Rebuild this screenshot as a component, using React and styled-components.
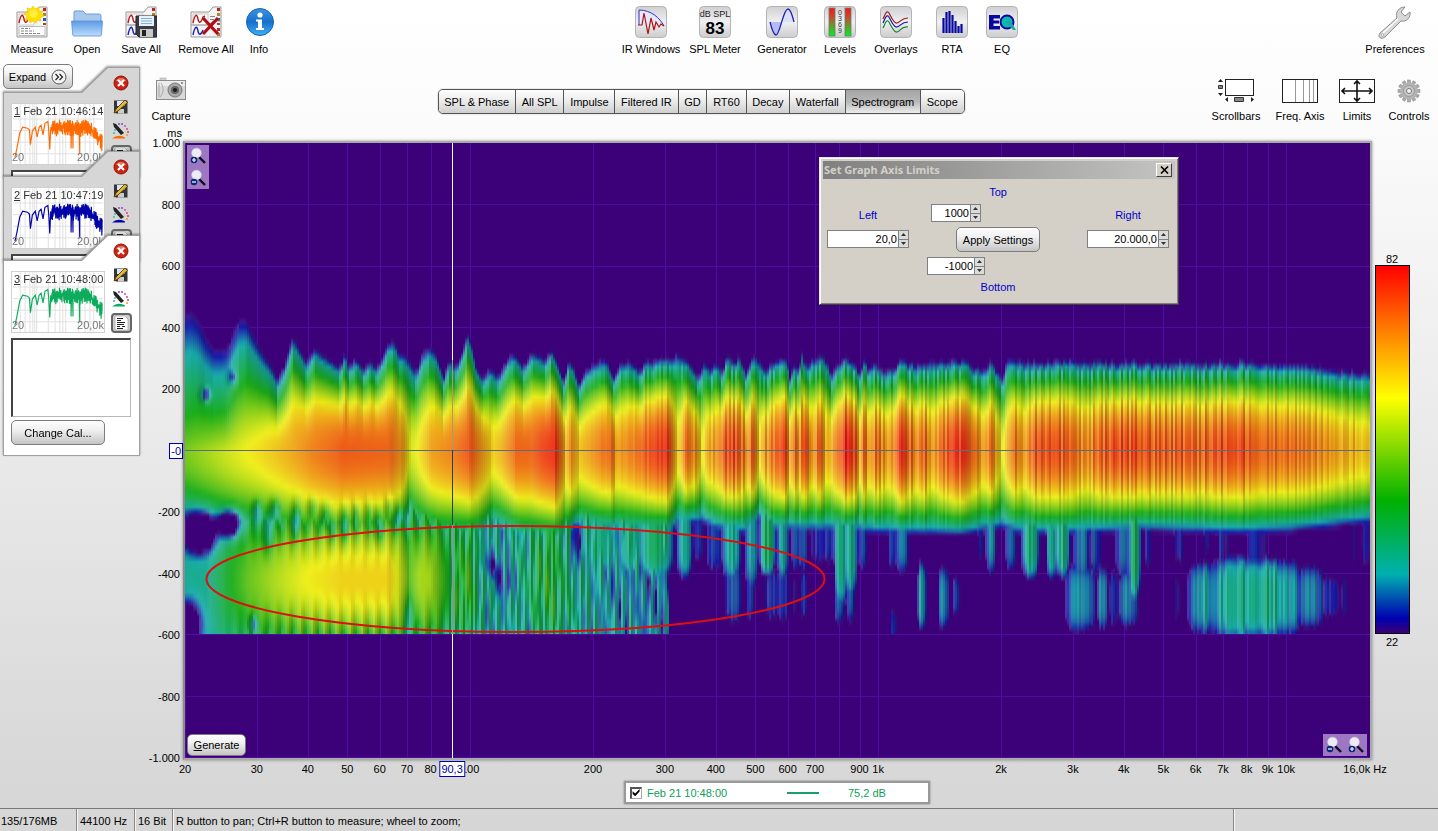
import React, { useState } from "react";
import styled, { createGlobalStyle, css } from "styled-components";

/* ---------- spectrogram model ---------- */

// plot area in drawing units
const PLOT = { x: 185, y: 143, w: 1185, h: 615 };
const Y0 = 302;
const Y1 = 634;
const COL = 2;
const STEP = 5;

const COLOURS = [
  [22, 60, 0, 120],
  [25, 0, 0, 176],
  [31, 0, 176, 176],
  [44, 0, 176, 0],
  [60, 255, 255, 0],
  [70, 255, 140, 0],
  [82, 255, 0, 0],
];

const TOP_EDGE = [
  185, 311, 191, 310, 198, 318, 205, 335, 213, 347, 222, 348, 228, 345, 233, 330,
  239, 318, 246, 319, 252, 333, 262, 352, 270, 364, 277, 379, 284, 365, 292, 335,
  299, 348, 306, 362, 314, 347, 322, 354, 340, 367, 344, 351, 348, 366, 356, 358,
  363, 369, 370, 360, 376, 368, 383, 355, 387, 343, 394, 340, 398, 353, 404, 353,
  410, 362, 416, 371, 422, 352, 429, 346, 435, 352, 443, 377, 449, 359, 456, 366,
  462, 350, 467, 332, 471, 345, 475, 365, 482, 378, 490, 367, 498, 376, 508, 356,
  514, 353, 523, 366, 532, 351, 545, 359, 551, 349, 556, 360, 563, 381, 568, 359,
  573, 366, 578, 385, 585, 370, 595, 362, 606, 359, 613, 378, 620, 362, 630, 361,
  640, 371, 645, 360, 652, 362, 660, 356, 670, 358, 677, 354, 685, 359, 693, 367,
  698, 378, 703, 360, 710, 369, 716, 360, 722, 373, 727, 353, 732, 362, 740, 356,
  745, 376, 752, 354, 758, 359, 764, 371, 772, 361, 785, 355, 789, 376, 794, 362,
  798, 372, 801, 353, 807, 368, 812, 357, 825, 357, 832, 376, 837, 363, 844, 358,
  855, 366, 860, 369, 864, 359, 867, 371, 872, 361, 886, 372, 900, 361, 920, 363,
  940, 361, 968, 360, 980, 371, 990, 361, 1002, 376, 1006, 361, 1070, 360, 1110, 361,
  1200, 362, 1240, 361, 1270, 363, 1300, 364, 1330, 369, 1350, 371, 1370, 373,
];

const PEAK = [
  185, 51, 230, 58, 260, 62, 290, 67, 310, 71, 340, 75, 390, 74, 402, 69, 410, 58,
  416, 60, 430, 68, 450, 71, 470, 76, 480, 70, 492, 63, 500, 66, 515, 74, 530, 74,
  540, 77, 555, 80, 561, 72, 565, 66, 570, 71, 579, 65, 600, 72, 612, 74, 615, 68,
  640, 74, 660, 79, 668, 79, 676, 64, 678, 62, 685, 74, 695, 71, 702, 60, 705, 66,
  720, 72, 724, 76, 733, 78, 743, 73, 746, 67, 752, 78, 759, 62, 765, 69, 775, 75,
  785, 80, 788, 67, 795, 75, 799, 69, 802, 79, 812, 68, 818, 76, 826, 66, 833, 69,
  845, 81, 856, 76, 858, 67, 864, 75, 867, 67, 876, 75, 888, 67, 900, 79, 915, 72,
  925, 75, 930, 67, 945, 76, 960, 80, 974, 75, 980, 67, 990, 74, 1001, 61, 1015, 73,
  1022, 68, 1035, 77, 1050, 77, 1075, 74, 1085, 71, 1115, 78, 1150, 76, 1200, 75,
  1235, 78, 1250, 75, 1270, 74, 1300, 73, 1330, 69, 1370, 64,
];

const BOTTOM_EDGE = [
  185, 526, 240, 541, 300, 550, 340, 554, 380, 551, 402, 540, 409, 522, 416, 536,
  440, 545, 480, 543, 492, 530, 520, 543, 560, 547, 580, 532, 620, 535, 668, 536,
  678, 526, 702, 524, 715, 531, 745, 535, 759, 521, 770, 532, 850, 533, 880, 535,
  960, 537, 1001, 530, 1020, 535, 1060, 536, 1140, 532, 1240, 535, 1290, 533, 1370, 524,
];

const LOW_PEAK = [
  185, 33, 208, 34, 225, 42, 250, 50, 280, 56, 305, 60, 340, 63, 388, 63, 400, 58,
  409, 49, 420, 55, 432, 54, 445, 45, 452, 40, 467, 48, 476, 37, 492, 32, 505, 33,
  525, 36, 550, 43, 562, 37, 580, 35, 600, 31, 668, 28,
];

// x, y, rx, ry, level
const BLOBS = [
  [655, 540, 20, 40, 38], [630, 540, 16, 36, 35], [600, 540, 18, 34, 35],
  [684, 540, 9, 40, 33], [698, 536, 6, 26, 26], [714, 540, 9, 32, 27],
  [731, 540, 10, 44, 34], [733, 592, 9, 32, 28], [751, 540, 7, 52, 32],
  [750, 592, 4, 30, 27], [767, 540, 9, 38, 39], [782, 540, 6, 44, 34],
  [772, 594, 9, 26, 26], [782, 594, 6, 30, 27], [795, 540, 5, 32, 28],
  [803, 540, 4, 32, 28], [794, 596, 2, 20, 24], [803, 594, 4, 24, 26],
  [816, 536, 6, 28, 25], [828, 536, 8, 28, 26], [840, 540, 7, 72, 36],
  [850, 540, 7, 60, 34], [839, 590, 5, 36, 29], [850, 588, 5, 34, 27],
  [860, 540, 6, 30, 27], [893, 540, 5, 30, 27], [902, 540, 8, 32, 28],
  [921, 596, 5, 36, 32], [943, 598, 6, 32, 30], [956, 596, 4, 19, 26],
  [893, 632, 3, 24, 27], [980, 540, 3, 18, 24], [990, 536, 6, 38, 30],
  [1010, 540, 6, 30, 27], [1030, 536, 10, 46, 37], [1051, 538, 6, 44, 35],
  [1062, 538, 8, 42, 36], [1081, 540, 9, 48, 30], [1094, 540, 6, 36, 27],
  [1078, 598, 14, 36, 31], [1087, 598, 8, 34, 30], [1102, 598, 6, 32, 30],
  [1114, 598, 8, 28, 26], [1126, 598, 9, 30, 30], [1134, 598, 6, 26, 26],
  [1122, 540, 9, 40, 29], [1134, 540, 7, 64, 38], [1147, 540, 5, 26, 24],
  [1179, 538, 6, 24, 24], [1207, 536, 4, 18, 24], [1222, 538, 6, 26, 25],
  [1256, 540, 10, 40, 26], [1364, 538, 12, 22, 23], [1176, 598, 5, 18, 23],
  [1203, 598, 17, 38, 32], [1235, 598, 30, 44, 35], [1264, 598, 38, 42, 35],
  [1290, 598, 12, 38, 31], [1309, 597, 17, 31, 29], [1330, 597, 17, 20, 25],
];

// places where the level falls away
const HOLES = [
  [199, 533, 15, 18, 34], [229, 524, 10, 13, 30], [188, 624, 11, 20, 26],
  [205, 395, 4, 6, 18], [232, 378, 4, 7, 12], [257, 511, 4, 9, 14],
  [275, 510, 5, 10, 12], [296, 520, 4, 16, 14], [253, 624, 3, 8, 18],
  [325, 516, 5, 12, 10], [344, 524, 4, 16, 13], [355, 516, 3, 12, 11],
  [378, 526, 4, 16, 12], [398, 518, 4, 12, 13], [368, 514, 3, 12, 9],
  [312, 508, 4, 10, 8], [332, 530, 3, 12, 8], [388, 508, 3, 10, 7],
  [268, 535, 6, 18, 9], [492, 566, 4, 14, 10], [509, 584, 3, 14, 11],
  [500, 578, 4, 16, 9], [484, 564, 3, 12, 8], [575, 545, 5, 24, 12],
  [409, 615, 5, 20, 10],
];

const hash = (n) => {
  const v = Math.sin(n * 127.1) * 43758.5453;
  return v - Math.floor(v);
};

const lookup = (table, x) => {
  if (x <= table[0]) return table[1];
  for (let i = 2; i < table.length; i += 2) {
    if (x <= table[i]) {
      const t = (x - table[i - 2]) / (table[i] - table[i - 2]);
      return table[i - 1] + (table[i + 1] - table[i - 1]) * t;
    }
  }
  return table[table.length - 1];
};

const level = (x, y) => {
  const grain = x > 570 ? Math.min(1, (x - 570) / 250) : 0;
  const noise = (hash(Math.round(x / 2)) - 0.5) * grain;
  const fade = x > 1250 ? 0.5 : 1;
  const peak = lookup(PEAK, x) + noise * 4 * fade;
  const top = lookup(TOP_EDGE, x) - noise * 7 * fade;
  const bottom = lookup(BOTTOM_EDGE, x);
  const dy = y - 450;
  const r = Math.abs(dy < 0 ? dy / (450 - top) : dy / (bottom - 450));
  // the low end falls off more slowly above the axis
  const curve = dy < 0 ? 1 + Math.min(1, Math.max(0, (x - 225) / 70)) : 2;
  let v = peak - (peak - 22) * Math.pow(r, curve);

  if (x < 669 && y > 470) {
    const far = Math.abs(y - 580) / 60;
    const rise = Math.min(1, Math.max(0, (x - 220) / 80));
    const streak =
      x < 450
        ? Math.cos((x * 2 * Math.PI) / 12.5) * 6 * far * far * rise
        : Math.cos((x * 2 * Math.PI) / 7) * 3 +
          (hash(Math.round(x / 2) + 7) - 0.5) * 5 +
          Math.sin(x * 0.71 + y * 0.06) * 2.5 +
          Math.sin(x * 0.33 - y * 0.09) * 2;
    const lp = lookup(LOW_PEAK, x);
    v = Math.max(v, lp + streak - (lp - 31) * 0.62 * far * far);
  }
  if (y > 500) {
    for (const [bx, by, rx, ry, bl] of BLOBS) {
      const dx = (x - bx) / rx;
      if (dx > -1 && dx < 1) {
        const d = (y - by) / ry;
        const m = bl + noise * 4 - (bl - 22) * (dx * dx + d * d * d * d);
        if (m > v) v = m;
      }
    }
  }
  if (x < 600) {
    for (const [hx, hy, rx, ry, hl] of HOLES) {
      const dx = (x - hx) / rx;
      const d = (y - hy) / ry;
      const q = dx * dx + d * d;
      if (q < 6) v -= hl * Math.exp(-q);
    }
  }
  return v;
};

const paint = (v, slope) => {
  let i = 1;
  while (i < COLOURS.length - 1 && v > COLOURS[i][0]) i += 1;
  const a = COLOURS[i - 1];
  const b = COLOURS[i];
  const t = Math.max(0, Math.min(1, (v - a[0]) / (b[0] - a[0])));
  const light = Math.tanh(slope) * (slope > 0 ? 0.18 : 0.22);
  const rgb = [1, 2, 3].map((k) => {
    const c = (a[k] + (b[k] - a[k]) * t) * 0.84 + 24;
    return Math.round(light > 0 ? c + (255 - c) * light : c * (1 + light));
  });
  return `rgb(${rgb.join(",")})`;
};

const buildColumns = () => {
  const columns = [];
  for (let x = PLOT.x; x < PLOT.x + PLOT.w; x += COL) {
    const samples = [];
    for (let y = Y0; y <= Y1 + 1; y += STEP) {
      const v = level(x, y);
      samples.push({ y, v, slope: (level(x + COL, y) - v) / COL });
    }
    const stops = samples.filter(
      (s, i) =>
        s.v > 22 ||
        (samples[i - 1] && samples[i - 1].v > 22) ||
        (samples[i + 1] && samples[i + 1].v > 22)
    );
    columns.push({ x, stops });
  }
  return columns;
};

const COLUMNS = buildColumns();
const SPAN = PLOT.w / 408;
const across = (f) => Math.log10(f / 20) / SPAN;

const FREQUENCIES = [
  20, 30, 40, 50, 60, 70, 80, 90, 100, 200, 300, 400, 500, 600, 700, 800, 900,
  1000, 2000, 3000, 4000, 5000, 6000, 7000, 8000, 9000, 10000,
];

const Spectrogram = () => (
  <PlotSvg
    viewBox={`${PLOT.x} ${PLOT.y} ${PLOT.w} ${PLOT.h}`}
    preserveAspectRatio="none"
    role="img"
    aria-label="Spectrogram"
  >
    <defs>
      {COLUMNS.map((c) => (
        <linearGradient
          key={c.x}
          id={`c${c.x}`}
          gradientUnits="userSpaceOnUse"
          x1="0"
          x2="0"
          y1={Y0}
          y2={Y1 + 4}
        >
          {c.stops.map((s) => (
            <stop
              key={s.y}
              offset={(s.y - Y0) / (Y1 + 4 - Y0)}
              stopColor={paint(s.v, s.slope)}
              stopOpacity={Math.max(0, Math.min(1, (s.v - 22) / 1.2))}
            />
          ))}
        </linearGradient>
      ))}
    </defs>
    <g stroke="#500ca0" strokeWidth="1">
      {FREQUENCIES.map((f) => {
        const x = Math.round(PLOT.x + across(f) * PLOT.w) + 0.5;
        return <line key={f} x1={x} x2={x} y1="143" y2="758" />;
      })}
      {[204.5, 266.5, 327.5, 389.5, 512.5, 573.5, 634.5, 696.5, 757.5].map((y) => (
        <line key={y} x1="185" x2="1370" y1={y} y2={y} />
      ))}
    </g>
    <g shapeRendering="crispEdges">
      {COLUMNS.map((c) => (
        <rect key={c.x} x={c.x} y={Y0} width={COL} height={Y1 - Y0} fill={`url(#c${c.x})`} />
      ))}
    </g>
    <ellipse cx="515.5" cy="579" rx="309" ry="53" fill="none" stroke="#dc1010" strokeWidth="2" />
    <path d="M185 450.5H1370" stroke="#5c6c7c" strokeWidth="1" />
    <path d="M452.5 143V360M452.5 634V758" stroke="#fff" strokeWidth="1" />
    <path d="M452.5 360V450" stroke="#a8987c" strokeWidth="1" />
    <path d="M452.5 450V525" stroke="#30384c" strokeWidth="1" />
    <path d="M452.5 525V634" stroke="#a08898" strokeWidth="1" />
  </PlotSvg>
);

/* ---------- icons ---------- */

const SheetBase = ({ id }) => (
  <>
    <path d="M1 6H19L23 1H31V31H1Z" fill="#f4f4f4" stroke="#999" />
    <path d="M3 8H18V19H3Z" fill="#fff" stroke="#ccc" />
    <path d="M3 17C5 7 7 8 8 13S11 17 13 11L15 10" fill="none" stroke="#c01818" strokeWidth="1.4" />
    <path d="M27 2h3v3h-3z" fill="#c02020" />
    <path d="M27 7h3v3h-3z" fill="#b88020" />
    <path d="M27 12h3v3h-3z" fill="#2060b0" />
    <path d="M27 17h3v2h-3z" fill="#b04020" />
    <path d="M20 10.500H25M20 13.500H24" stroke="#888" />
    {id === "two" && (
      <>
        <path d="M1 19H19L23 15H31" fill="none" stroke="#999" />
        <path d="M3 29C5 19 7 20 8 25S11 29 13 24" fill="none" stroke="#1820b0" strokeWidth="1.4" />
        <path d="M27 22h3v3h-3z" fill="#c02020" />
        <path d="M27 27h3v3h-3z" fill="#b88020" />
      </>
    )}
  </>
);

const MeasureIcon = () => (
  <svg width="32" height="32" viewBox="0 0 32 32">
    <SheetBase />
    <path d="M3 20.500H29V29.500H3Z" fill="#fff" stroke="#bbb" />
    <path d="M5 22.500H14M5 25H18M5 27.500H24" stroke="#666" strokeWidth="0.800" strokeDasharray="3 1" />
    <path
      d="M17 0l2 3 4-2 0 4 4 0-2 3 3 2-4 2 1 3-4-1-1 3-3-2-3 2-1-3-4 0 2-4-3-2 4-2-1-4 4 1z"
      fill="#ffe000"
      stroke="#f0c000"
      strokeWidth="0.600"
    />
    <circle cx="17.500" cy="7.500" r="4" fill="#fff040" />
  </svg>
);

const OpenIcon = () => (
  <svg width="32" height="32" viewBox="0 0 32 32">
    <defs>
      <linearGradient id="folder" x2="0" y2="1">
        <stop offset="0" stopColor="#5c9be4" />
        <stop offset="1" stopColor="#bcdcfc" />
      </linearGradient>
    </defs>
    <path d="M3 26V6Q3 5 4 5H12L15 8H28Q30 8 30 10V26Z" fill="#a8c8ee" stroke="#6a9cd8" />
    <path d="M0.500 15H31.500L30.500 29Q30 30 29 30H3Q2 30 1.800 29Z" fill="url(#folder)" stroke="#5c93dc" strokeWidth="0.800" />
  </svg>
);

const SaveAllIcon = () => (
  <svg width="32" height="32" viewBox="0 0 32 32">
    <SheetBase id="two" />
    <path d="M11 10H32V31H14L11 28Z" fill="#3a3a44" stroke="#222" />
    <path d="M14 10H29V20H14Z" fill="#e4f0fa" />
    <path d="M16 12.500H27M16 15H27M16 17.500H27" stroke="#8cb0d4" />
    <path d="M15 23H28V31H15Z" fill="#c8c8c8" />
    <path d="M17 24H21V30H17Z" fill="#222" />
  </svg>
);

const RemoveAllIcon = () => (
  <svg width="32" height="32" viewBox="0 0 32 32">
    <SheetBase id="two" />
    <path d="M13 12L28 28M28 12L13 28" stroke="#b00c14" strokeWidth="3.200" />
  </svg>
);

const InfoIcon = () => (
  <svg width="32" height="32" viewBox="0 0 32 32">
    <defs>
      <linearGradient id="info" x2="0" y2="1">
        <stop offset="0" stopColor="#3c94e4" />
        <stop offset="0.500" stopColor="#1670cc" />
        <stop offset="1" stopColor="#40b0f4" />
      </linearGradient>
    </defs>
    <circle cx="17" cy="16" r="13.500" fill="url(#info)" stroke="#1464b8" />
    <circle cx="17" cy="9" r="2.600" fill="#fff" />
    <path d="M13 13.500H19V22H21V24H13V22H15V15.500H13Z" fill="#fff" />
  </svg>
);

const TileIcon = ({ children }) => (
  <svg width="32" height="32" viewBox="0 0 32 32">
    <defs>
      <linearGradient id="tile" x2="0" y2="1">
        <stop offset="0" stopColor="#d0d0d2" />
        <stop offset="0.500" stopColor="#f0f0f2" />
        <stop offset="1" stopColor="#ccccce" />
      </linearGradient>
    </defs>
    <rect x="0.500" y="0.500" width="31" height="31" rx="4" fill="url(#tile)" stroke="#b4b4b4" />
    {children}
  </svg>
);

const IrIcon = () => (
  <TileIcon>
    <path d="M4 19V4C16 4 25 12 29 20" fill="#e8e8fa" stroke="#3030c0" />
    <path d="M3 19H7L9 7 13 28 16 12 19 24 21 16 24 21 26 18 29 20" fill="none" stroke="#a81414" strokeWidth="1.200" />
  </TileIcon>
);

const SplIcon = () => (
  <TileIcon>
    <text x="16" y="11" textAnchor="middle" fontSize="9" fontFamily="Liberation Sans" fill="#222">dB SPL</text>
    <text x="16" y="28" textAnchor="middle" fontSize="17" fontWeight="700" fontFamily="Liberation Sans">83</text>
  </TileIcon>
);

const GeneratorIcon = () => (
  <TileIcon>
    <path d="M4 16C6 24 8 29 10 29S14 24 16 16Z" fill="#b4bcf4" />
    <path d="M16 16C18 8 20 3 22 3S26 8 28 16Z" fill="#dce0fc" />
    <path d="M4 16C6 24 8 29 10 29C14 29 17 3 22 3C24 3 26 8 28 16" fill="none" stroke="#2020b0" strokeWidth="1.300" />
  </TileIcon>
);

const LevelsIcon = () => (
  <TileIcon>
    <defs>
      <linearGradient id="meter" x2="0" y2="1">
        <stop offset="0" stopColor="#ff1010" />
        <stop offset="0.350" stopColor="#c05030" />
        <stop offset="1" stopColor="#00f020" />
      </linearGradient>
    </defs>
    <rect x="5" y="2" width="6" height="28" fill="url(#meter)" stroke="#608070" strokeWidth="0.800" />
    <rect x="21" y="2" width="6" height="28" fill="url(#meter)" stroke="#608070" strokeWidth="0.800" />
    {["0", "3", "6", "9"].map((t, i) => (
      <text key={t} x="16" y={9 + i * 6} textAnchor="middle" fontSize="7" fontFamily="Liberation Sans" fill="#333">{t}</text>
    ))}
  </TileIcon>
);

const OverlaysIcon = () => (
  <TileIcon>
    <g fill="none" strokeWidth="1.200">
      <path d="M3 13C5 9 6 5 8 6S13 18 17 17 21 12 28 12" stroke="#a01818" />
      <path d="M3 17C5 13 6 9 8 10S13 22 17 21 21 16 28 16" stroke="#1818a8" />
      <path d="M3 22C5 18 6 14 8 15S13 27 17 26 21 20 28 21" stroke="#188828" />
    </g>
  </TileIcon>
);

const RtaIcon = () => (
  <TileIcon>
    <path d="M7.500 27V12M10.500 27V6M13.500 27V5M16.500 27V9M19.500 27V15M22.500 27V20M25.500 27V18" stroke="#0808a0" strokeWidth="2.200" />
  </TileIcon>
);

const EqIcon = () => (
  <TileIcon>
    <path d="M3 9H14V12.500H7.500V14.500H13V17.500H7.500V20H14V23.500H3Z" fill="#0808a0" />
    <circle cx="21" cy="16" r="6.500" fill="#10b8b0" stroke="#0808a0" strokeWidth="2" />
    <path d="M20 16L27 24H30L24 14Z" fill="#18a8a8" />
  </TileIcon>
);

const WrenchIcon = () => (
  <svg width="34" height="34" viewBox="0 0 34 34">
    <path
      d="M2 27L19 12C17 6 21 1 27 1L23 6L27 10L32 6C33 12 28 16 23 15L7 31C3 34 -1 31 2 27Z"
      fill="#d8d8d8"
      stroke="#8c8c8c"
    />
    <path d="M5 27L20 13" stroke="#fff" strokeWidth="1.500" />
    <circle cx="4.500" cy="29" r="1.300" fill="#fff" stroke="#888" strokeWidth="0.600" />
  </svg>
);

const CameraIcon = () => (
  <svg width="32" height="24" viewBox="0 0 32 24">
    <rect x="5" y="1" width="6" height="3" fill="#d0d0d0" stroke="#aaa" strokeWidth="0.600" />
    <rect x="1.500" y="3.500" width="29" height="19" fill="#d8d8d8" stroke="#8c8c8c" />
    <path d="M2 4H30V9H2Z" fill="#ececec" />
    <path d="M4 6V20M6 6C9 10 9 16 5 20" stroke="#aaa" fill="none" />
    <circle cx="20" cy="13" r="7" fill="#a8a8a8" stroke="#777" />
    <circle cx="20" cy="13" r="4" fill="#666" />
    <circle cx="20" cy="13" r="2" fill="#1c1c1c" />
    <circle cx="27" cy="6" r="1" fill="#777" />
  </svg>
);

const ScrollbarsIcon = () => (
  <svg width="38" height="26" viewBox="0 0 38 26">
    <rect x="8.500" y="2.500" width="28" height="16" fill="#fff" stroke="#222" />
    <path d="M3.500 2l2.500 3h-5zM3.500 19l2.500-3h-5zM8 22.500l3-2.500v5zM37 22.500l-3-2.500v5z" fill="#222" />
    <path d="M1.500 8.500h4v3h-4zM17.500 20.500h9v4h-9z" fill="#888" stroke="#333" />
  </svg>
);

const FreqAxisIcon = () => (
  <svg width="38" height="26" viewBox="0 0 38 26">
    <rect x="1.500" y="2.500" width="35" height="23" fill="#fff" stroke="#222" />
    <path d="M14.500 3V25M22.500 3V25M28.500 3V25M32.500 3V25" stroke="#999" />
  </svg>
);

const LimitsIcon = () => (
  <svg width="38" height="26" viewBox="0 0 38 26">
    <rect x="1.500" y="2.500" width="35" height="23" fill="#fff" stroke="#222" />
    <path d="M4 14H34M19 5V24M7 11L4 14L7 17M31 11L34 14L31 17M16 7L19 4L22 7M16 21L19 24L22 21" fill="none" stroke="#111" strokeWidth="1.600" />
  </svg>
);

const GearIcon = () => (
  <svg width="24" height="26" viewBox="0 0 24 26">
    {[0, 30, 60, 90, 120, 150].map((a) => (
      <rect key={a} x="10.500" y="3" width="3" height="22" fill="#aaa" stroke="#888" strokeWidth="0.500" transform={`rotate(${a} 12 14)`} />
    ))}
    <circle cx="12" cy="14" r="8.500" fill="#b4b4b4" />
    <circle cx="12" cy="14" r="5.500" fill="#c8c8c8" stroke="#999" />
    <circle cx="12" cy="14" r="2.500" fill="#f4f4f4" stroke="#777" />
  </svg>
);

const CloseRound = () => (
  <svg width="16" height="16" viewBox="0 0 16 16">
    <circle cx="8" cy="8" r="7" fill="#cc2410" stroke="#8c1408" />
    <path d="M3 6C4 2 12 2 13 6Z" fill="#e87868" />
    <path d="M5 5L11 11M11 5L5 11" stroke="#fff" strokeWidth="2.200" />
  </svg>
);

const DiskPencil = () => (
  <svg width="16" height="16" viewBox="0 0 16 16">
    <path d="M1 1.500H14.500V14.500H3L1 13Z" fill="#33343c" />
    <path d="M4 2H12V7H4Z" fill="#dce4ea" />
    <path d="M5 10H11V14.500H5Z" fill="#ccc" />
    <path d="M1 14L3 10L12 1L14.500 3.500L5 12Z" fill="#e4b830" stroke="#3c2c08" strokeWidth="0.800" />
  </svg>
);

const WandIcon = ({ colour }) => (
  <svg width="18" height="18" viewBox="0 0 18 18">
    <path d="M1 1L4 2L12 11L9 13L2 5Z" fill="#222" />
    <path d="M0 16.500Q4 13 9 14T13 16.500Z" fill={colour} />
    <circle cx="7" cy="2" r="1" fill="#7050e0" />
    <circle cx="10" cy="2" r="1" fill="#9040d0" />
    <circle cx="13" cy="4" r="1" fill="#c050c0" />
    <circle cx="15" cy="7" r="1" fill="#e04080" />
    <circle cx="16" cy="10" r="1" fill="#e04040" />
    <circle cx="15" cy="13" r="1" fill="#e0a030" />
    <circle cx="3" cy="8" r="1" fill="#40b0e0" />
    <circle cx="2" cy="11" r="1" fill="#40c080" />
  </svg>
);

const NotesIcon = () => (
  <svg width="21" height="20" viewBox="0 0 21 20">
    <rect x="1" y="1" width="19" height="18" rx="3" fill="#d0d0d0" stroke="#666" strokeWidth="2" />
    <path d="M4 3H14L17 6V17H4Z" fill="#fff" stroke="#999" strokeWidth="0.600" />
    <path d="M6 5.500H12M6 7.500H10M6 9.500H14M6 11.500H13M6 13.500H9M11 13.500H14M6 15.500H12" stroke="#222" />
  </svg>
);

const Magnifier = ({ plus }) => (
  <svg width="18" height="18" viewBox="0 0 18 18">
    <path d="M9 9L16 16" stroke="#0c0c1c" strokeWidth="2.400" />
    <circle cx="7.500" cy="6" r="4.800" fill="#ececf4" stroke="#d4d0e4" strokeWidth="0.600" />
    <circle cx="5" cy="13" r="3.300" fill="#082878" />
    <path d={plus ? "M3 13H7M5 11V15" : "M3 13H7"} stroke="#fff" strokeWidth="1.200" />
  </svg>
);

const tracePoints = (seed) => {
  const intro = [
    [2, 55], [4, 46], [7, 30], [10, 24], [15, 25], [17, 27], [18, 42], [20, 28], [23, 24],
    [25, 34], [27, 24], [29, 22], [31, 32], [33, 20], [36, 18], [37, 28], [38, 47], [39, 24],
  ];
  const rest = [];
  for (let i = 0; i < 150; i += 1) {
    const x = 40 + i * 0.35;
    const drop = x > 78 ? (x - 78) * 1.1 : 0;
    const low = hash(i + seed) * 10;
    rest.push([x, (i % 2 ? 16 + hash(i * 3) * 7 : 24 + low) + drop]);
  }
  rest[58] = [60, 46];
  rest[62] = [62, 46];
  rest[82] = [69, 52];
  return intro.concat(rest).map((p) => p.join(",")).join(" ");
};

const Trace = ({ colour, seed }) => (
  <TraceSvg viewBox="0 0 93 62" aria-hidden="true">
    <path
      d="M7.500 0V62M12.500 0V62M17.500 0V62M20.500 0V62M22.500 0V62M24.500 0V62M36.500 0V62M43.500 0V62M48.500 0V62M51.500 0V62M54.500 0V62M67.500 0V62M74.500 0V62M79.500 0V62M83.500 0V62M0 15.500H93M0 27.500H93M0 39.500H93M0 51.500H93"
      stroke="#e0e0e0"
    />
    <polyline points={tracePoints(seed)} fill="none" stroke={colour} strokeWidth="1.200" />
  </TraceSvg>
);

/* ---------- data ---------- */

const FILE_TOOLS = [
  { label: "Measure", Icon: MeasureIcon, width: 64 },
  { label: "Open", Icon: OpenIcon, width: 46 },
  { label: "Save All", Icon: SaveAllIcon, width: 62 },
  { label: "Remove All", Icon: RemoveAllIcon, width: 68 },
  { label: "Info", Icon: InfoIcon, width: 38 },
];

const METER_TOOLS = [
  { label: "IR Windows", Icon: IrIcon, width: 68 },
  { label: "SPL Meter", Icon: SplIcon, width: 60 },
  { label: "Generator", Icon: GeneratorIcon, width: 74 },
  { label: "Levels", Icon: LevelsIcon, width: 42 },
  { label: "Overlays", Icon: OverlaysIcon, width: 70 },
  { label: "RTA", Icon: RtaIcon, width: 42 },
  { label: "EQ", Icon: EqIcon, width: 58 },
];

const VIEW_TOOLS = [
  { label: "Scrollbars", Icon: ScrollbarsIcon, width: 64 },
  { label: "Freq. Axis", Icon: FreqAxisIcon, width: 64 },
  { label: "Limits", Icon: LimitsIcon, width: 50 },
  { label: "Controls", Icon: GearIcon, width: 54 },
];

const TABS = [
  "SPL & Phase", "All SPL", "Impulse", "Filtered IR", "GD", "RT60", "Decay",
  "Waterfall", "Spectrogram", "Scope",
];

const MEASUREMENTS = [
  { id: 1, name: "Feb 21 10:46:14", colour: "#ff6a00" },
  { id: 2, name: "Feb 21 10:47:19", colour: "#0000a8" },
  { id: 3, name: "Feb 21 10:48:00", colour: "#0cac5c", open: true },
];

const X_LABELS = [
  [20, "20"], [30, "30"], [40, "40"], [50, "50"], [60, "60"], [70, "70"], [80, "80"],
  [100, "100"], [200, "200"], [300, "300"], [400, "400"], [500, "500"], [600, "600"],
  [700, "700"], [900, "900"], [1000, "1k"], [2000, "2k"], [3000, "3k"], [4000, "4k"],
  [5000, "5k"], [6000, "6k"], [7000, "7k"], [8000, "8k"], [9000, "9k"],
  [10000, "10k"], [15600, "16,0k Hz"],
];

const Y_LABELS = ["1.000", "800", "600", "400", "200", "", "-200", "-400", "-600", "-800", "-1.000"];

/* ---------- parts ---------- */

const Tools = ({ items }) =>
  items.map(({ label, Icon, width }) => (
    <ToolButton key={label} type="button" $width={width}>
      <Icon />
      {label}
    </ToolButton>
  ));

const Spinner = ({ label, value, width }) => (
  <SpinBox $width={width}>
    <SpinInput aria-label={label} defaultValue={value} />
    <Arrows>
      <ArrowButton type="button" aria-label={`${label} up`}>
        <svg width="5" height="3" viewBox="0 0 5 3"><path d="M0 3L2.500 0L5 3Z" fill="#333" /></svg>
      </ArrowButton>
      <ArrowButton type="button" aria-label={`${label} down`}>
        <svg width="5" height="3" viewBox="0 0 5 3"><path d="M0 0L2.500 3L5 0Z" fill="#333" /></svg>
      </ArrowButton>
    </Arrows>
  </SpinBox>
);

const Measurement = ({ item }) => (
  <CardShadow $open={item.open}>
    <CardEdge>
      <Card $open={item.open}>
        <CardMain>
          <Thumb>
            <Trace colour={item.colour} seed={item.id} />
            <ThumbTitle><u>{item.id}</u> {item.name}</ThumbTitle>
            <ThumbScale><span>20</span><span>20,0k</span></ThumbScale>
          </Thumb>
          <CardIcons>
            <IconButton type="button" aria-label="Remove"><CloseRound /></IconButton>
            <IconButton type="button" aria-label="Save"><DiskPencil /></IconButton>
            <IconButton type="button" aria-label="Trace colour"><WandIcon colour={item.colour} /></IconButton>
            <IconButton type="button" aria-label="Notes"><NotesIcon /></IconButton>
          </CardIcons>
        </CardMain>
        <Notes aria-label={`Notes ${item.id}`} />
        {item.open && <CalButton type="button">Change Cal...</CalButton>}
      </Card>
    </CardEdge>
  </CardShadow>
);

const LimitsDialog = () => (
  <Dialog role="dialog" aria-label="Set Graph Axis Limits">
    <DialogTitle>
      Set Graph Axis Limits
      <DialogClose type="button" aria-label="Close">
        <svg width="9" height="8" viewBox="0 0 9 8"><path d="M1 0.500L8 7.500M8 0.500L1 7.500" stroke="#000" strokeWidth="1.600" /></svg>
      </DialogClose>
    </DialogTitle>
    <DialogBody>
      <SideField>
        <FieldLabel>Left</FieldLabel>
        <Spinner label="Left" value="20,0" width={82} />
      </SideField>
      <MiddleFields>
        <FieldLabel>Top</FieldLabel>
        <SpinSlot><Spinner label="Top" value="1000" width={50} /></SpinSlot>
        <ApplyButton type="button">Apply Settings</ApplyButton>
        <SpinSlot><Spinner label="Bottom" value="-1000" width={58} /></SpinSlot>
        <FieldLabel>Bottom</FieldLabel>
      </MiddleFields>
      <SideField>
        <FieldLabel>Right</FieldLabel>
        <Spinner label="Right" value="20.000,0" width={82} />
      </SideField>
    </DialogBody>
  </Dialog>
);

export default function App() {
  const [tab, setTab] = useState("Spectrogram");
  const [shown, setShown] = useState(true);

  return (
    <Page>
      <GlobalStyle />
      <Toolbar>
        <ToolGroup $end={18}><Tools items={FILE_TOOLS} /></ToolGroup>
        <ToolGroup><Tools items={METER_TOOLS} /></ToolGroup>
        <ToolGroup>
          <ToolButton type="button" $width={86}><WrenchIcon />Preferences</ToolButton>
        </ToolGroup>
      </Toolbar>

      <Workspace>
        <Sidebar>
          <ExpandButton type="button">
            Expand
            <svg width="16" height="16" viewBox="0 0 16 16">
              <circle cx="8" cy="8" r="7" fill="#f4f4f4" stroke="#555" />
              <path d="M4.500 5L7.500 8L4.500 11M8.500 5L11.500 8L8.500 11" fill="none" stroke="#222" strokeWidth="1.200" />
            </svg>
          </ExpandButton>
          {MEASUREMENTS.map((m) => <Measurement key={m.id} item={m} />)}
        </Sidebar>

        <Main>
          <Header>
            <ViewButton type="button" $width={62}><CameraIcon />Capture</ViewButton>
            <TabBar role="tablist">
              {TABS.map((t) => (
                <Tab key={t} type="button" role="tab" aria-selected={t === tab} $active={t === tab} onClick={() => setTab(t)}>
                  {t}
                </Tab>
              ))}
            </TabBar>
            <ViewGroup>
              {VIEW_TOOLS.map(({ label, Icon, width }) => (
                <ViewButton key={label} type="button" $width={width}><Icon />{label}</ViewButton>
              ))}
            </ViewGroup>
          </Header>
          <Unit>ms</Unit>
          <GraphGrid>
            <YAxis>
              {Y_LABELS.map((t, i) => <YLabel key={i} style={{ top: `${i * 10}%` }}>{t}</YLabel>)}
              <YCursor>-0</YCursor>
            </YAxis>
            <Plot>
              <Spectrogram />
              <ZoomStack>
                <IconButton type="button" aria-label="Zoom in vertically"><Magnifier plus /></IconButton>
                <IconButton type="button" aria-label="Zoom out vertically"><Magnifier /></IconButton>
              </ZoomStack>
              <ZoomRow>
                <IconButton type="button" aria-label="Zoom out horizontally"><Magnifier /></IconButton>
                <IconButton type="button" aria-label="Zoom in horizontally"><Magnifier plus /></IconButton>
              </ZoomRow>
              <GenerateButton type="button"><span><u>G</u>enerate</span></GenerateButton>
              <LimitsDialog />
            </Plot>
            <ColourScale>
              <ScaleLabel $first>82</ScaleLabel>
              <ScaleBar />
              <ScaleLabel>22</ScaleLabel>
            </ColourScale>
            <XAxis>
              {X_LABELS.map(([f, t]) => <XLabel key={f} style={{ left: `${across(f) * 100}%` }}>{t}</XLabel>)}
              <XCursor style={{ left: `${across(90.3) * 100}%` }}>90,3</XCursor>
            </XAxis>
          </GraphGrid>
        </Main>
      </Workspace>

      <LegendRow>
        <Legend>
          <LegendLabel>
            <LegendCheck type="checkbox" checked={shown} onChange={() => setShown(!shown)} />
            Feb 21 10:48:00
          </LegendLabel>
          <LegendLine />
          <span>75,2 dB</span>
        </Legend>
      </LegendRow>

      <StatusBar>
        <StatusCell $width={76} $flush>135/176MB</StatusCell>
        <StatusCell $width={58}>44100 Hz</StatusCell>
        <StatusCell $width={38}>16 Bit</StatusCell>
        <StatusCell $grow>R button to pan; Ctrl+R button to measure; wheel to zoom;</StatusCell>
        <StatusCell $width={205} />
      </StatusBar>
    </Page>
  );
}

/* ---------- styles ---------- */

const GlobalStyle = createGlobalStyle`
  * { box-sizing: border-box; }
  body { margin: 0; }
  body, button, input, textarea {
    font-family: "Liberation Sans", Arial, sans-serif;
    font-size: 11px;
    line-height: 14px;
    color: #000;
  }
  svg { display: block; flex: none; }
`;

const raised = css`
  border: 1px solid #7c7c7c;
  border-radius: 5px;
  background: linear-gradient(#fdfdfd, #f0f0f0 40%, #c4c4c4);
  padding: 0;
`;

const Page = styled.div`
  display: flex;
  flex-direction: column;
  min-height: 100vh;
  background: linear-gradient(#fff, #fbfbfb 15%, #d8d8d8 92%, #d6d6d6);
`;

const Toolbar = styled.header`
  display: flex;
  justify-content: space-between;
  height: 62px;
  padding-top: 6px;
`;

const ToolGroup = styled.div`
  display: flex;
  padding-right: ${(p) => p.$end || 0}px;
`;

const ToolButton = styled.button`
  width: ${(p) => p.$width}px;
  height: 50px;
  padding: 0;
  border: 0;
  background: none;
  display: flex;
  flex-direction: column;
  align-items: center;
  justify-content: space-between;
  white-space: nowrap;
`;

const Workspace = styled.div`
  flex: 1;
  display: flex;
`;

const Sidebar = styled.aside`
  width: 140px;
  padding: 2px 0 0 3px;
  display: flex;
  flex-direction: column;
`;

const ExpandButton = styled.button`
  ${raised}
  position: relative;
  z-index: 1;
  width: 70px;
  height: 25px;
  margin-bottom: -22px;
  display: flex;
  align-items: center;
  justify-content: center;
  gap: 5px;
`;

const CardShadow = styled.div`
  filter: drop-shadow(0 -1px 1px rgba(0, 0, 0, 0.4));
  margin-bottom: ${(p) => (p.$open ? 0 : -28)}px;
`;

const folder = css`
  clip-path: polygon(0 25px, 78px 25px, 104px 0, 100% 0, 100% 100%, 0 100%);
`;

const CardEdge = styled.div`
  ${folder}
  padding: 1px;
  background: #a0a0a0;
`;

const Card = styled.div`
  ${folder}
  height: ${(p) => (p.$open ? 219 : 110)}px;
  overflow: hidden;
  padding: 0 7px;
  background: ${(p) => (p.$open ? "#fff" : "#d6d6d6")};
`;

const CardMain = styled.div`
  display: flex;
  height: 102px;
`;

const Thumb = styled.div`
  position: relative;
  width: 94px;
  height: 62px;
  margin-top: 35px;
  border: 1px solid #d0d0d0;
  background: #fff;
  display: flex;
  flex-direction: column;
  justify-content: space-between;
  color: #333;
`;

const TraceSvg = styled.svg`
  position: absolute;
  inset: 0;
  width: 100%;
  height: 100%;
`;

const ThumbTitle = styled.div`
  position: relative;
  padding-left: 2px;
  white-space: nowrap;
`;

const ThumbScale = styled.div`
  position: relative;
  display: flex;
  justify-content: space-between;
  color: #777;
`;

const CardIcons = styled.div`
  flex: 1;
  display: flex;
  flex-direction: column;
  align-items: center;
  padding: 3px 0 0 5px;
`;

const IconButton = styled.button`
  width: 22px;
  height: 24px;
  padding: 0;
  border: 0;
  background: none;
  display: flex;
  flex: none;
  align-items: center;
  justify-content: center;
`;

const Notes = styled.textarea`
  display: block;
  width: 120px;
  height: 79px;
  resize: none;
  border: 1px solid #b8b8b8;
  border-top: 2px solid #444;
  border-left: 2px solid #444;
`;

const CalButton = styled.button`
  ${raised}
  width: 94px;
  height: 25px;
  margin-top: 3px;
`;

const Main = styled.main`
  flex: 1;
  min-width: 0;
  display: flex;
  flex-direction: column;
`;

const Header = styled.div`
  display: flex;
  justify-content: space-between;
  height: 65px;
  padding-right: 2px;
`;

const ViewGroup = styled.div`
  display: flex;
  padding-left: 4px;
`;

const ViewButton = styled(ToolButton)`
  height: 46px;
  margin-top: 15px;
`;

const TabBar = styled.div`
  display: flex;
  width: 527px;
  height: 25px;
  margin-top: 27px;
  border: 1px solid #555;
  border-radius: 5px;
  overflow: hidden;
  box-shadow: 0 0 1px #555;
`;

const Tab = styled.button`
  flex: 1 0 auto;
  border: 0;
  border-right: 1px solid #555;
  padding: 0 5px;
  background: ${(p) =>
    p.$active
      ? "linear-gradient(#a4a4a4, #b8b8b8 50%, #ececec)"
      : "linear-gradient(#fdfdfd, #efefef 40%, #cfcfcf)"};
  white-space: nowrap;

  &:last-child {
    border-right: 0;
  }
`;

const Unit = styled.div`
  width: 42px;
  height: 14px;
  text-align: right;
  line-height: 12px;
`;

const GraphGrid = styled.div`
  flex: 1;
  display: grid;
  grid-template-columns: 43px 1fr 66px;
  grid-template-rows: 1fr 18px;
`;

const YAxis = styled.div`
  position: relative;
  margin: 2px 0;
`;

const YLabel = styled.span`
  position: absolute;
  right: 3px;
  transform: translateY(-50%);
`;

const boxed = css`
  position: absolute;
  border: 1px solid #0000a8;
  background: #fff;
  color: #0000a8;
  padding: 0 1px;
`;

const YCursor = styled.span`
  ${boxed}
  top: 50%;
  right: 0;
  transform: translateY(-50%);
`;

const Plot = styled.div`
  position: relative;
  border: 2px solid #aaa;
  border-left-color: #8c8c8c;
  background: #3c0078;
  box-shadow: 0 0 3px rgba(0, 0, 0, 0.4);
`;

const PlotSvg = styled.svg`
  position: absolute;
  inset: 0;
  width: 100%;
  height: 100%;
`;

const ZoomStack = styled.div`
  position: absolute;
  top: 2px;
  left: 2px;
  height: 44px;
  overflow: hidden;
  display: flex;
  flex-direction: column;
  background: rgba(200, 170, 225, 0.7);

  button {
    height: 22px;
  }
`;

const ZoomRow = styled.div`
  position: absolute;
  right: 3px;
  bottom: 2px;
  height: 22px;
  display: flex;
  align-items: center;
  background: rgba(200, 170, 225, 0.7);
`;

const GenerateButton = styled.button`
  ${raised}
  position: absolute;
  left: 2px;
  bottom: 2px;
  width: 59px;
  height: 22px;
`;

const ColourScale = styled.div`
  width: 40px;
  display: grid;
  grid-template-rows: 112fr 12px 369fr 16px 110fr;
  justify-items: center;
`;

const ScaleLabel = styled.span`
  grid-row: ${(p) => (p.$first ? 2 : 4)};
  line-height: ${(p) => (p.$first ? 12 : 16)}px;
`;

const ScaleBar = styled.div`
  grid-row: 3;
  width: 35px;
  border: 1px solid #000;
  background: linear-gradient(
    #ff0000,
    #ff9000 20%,
    #ffff00 36%,
    #00b000 64%,
    #00b0b0 84%,
    #0000b0 96%,
    #3c0078
  );
`;

const XAxis = styled.div`
  position: relative;
  grid-column: 2;
  margin: 0 2px;
`;

const XLabel = styled.span`
  position: absolute;
  top: 2px;
  transform: translateX(-50%);
  white-space: nowrap;
`;

const XCursor = styled.span`
  ${boxed}
  top: 1px;
  transform: translateX(-50%);
`;

const Dialog = styled.section`
  position: absolute;
  top: 14px;
  right: 191px;
  width: 360px;
  height: 148px;
  padding: 3px;
  border: 1px solid;
  border-color: #e8e4dc #404040 #404040 #e8e4dc;
  background: #d4d0c8;
  box-shadow: inset 1px 1px #fff, inset -1px -1px #808080;
`;

const DialogTitle = styled.div`
  display: flex;
  align-items: center;
  justify-content: space-between;
  height: 18px;
  padding: 0 3px 0 1px;
  background: linear-gradient(90deg, #808080, #c4c4c2);
  color: #d4d0c8;
  font-family: "Noto Sans", "Open Sans", sans-serif;
  font-weight: 700;
`;

const DialogClose = styled.button`
  width: 16px;
  height: 14px;
  padding: 0;
  border: 1px solid;
  border-color: #fff #404040 #404040 #fff;
  background: #d4d0c8;
  display: flex;
  align-items: center;
  justify-content: center;
`;

const DialogBody = styled.div`
  display: flex;
  justify-content: space-between;
  padding: 6px 6px 0 4px;
`;

const SideField = styled.div`
  display: flex;
  flex-direction: column;
  align-items: center;
  gap: 8px;
  padding-top: 23px;
`;

const MiddleFields = styled.div`
  display: flex;
  flex-direction: column;
  align-items: center;
  gap: 5px;
`;

const SpinSlot = styled.div`
  padding-right: 84px;
`;

const FieldLabel = styled.span`
  color: #0000c8;
`;

const SpinBox = styled.div`
  display: flex;
  width: ${(p) => p.$width}px;
  height: 18px;
  border: 1px solid #808080;
  background: #fff;
`;

const SpinInput = styled.input`
  flex: 1;
  min-width: 0;
  border: 0;
  padding: 0 1px;
  background: none;
  text-align: right;
`;

const Arrows = styled.div`
  width: 10px;
  display: flex;
  flex-direction: column;
  border-left: 1px solid #808080;
`;

const ArrowButton = styled.button`
  flex: 1;
  padding: 0;
  border: 0;
  background: #dcdcdc;
  display: flex;
  align-items: center;
  justify-content: center;

  &:last-child {
    border-top: 1px solid #808080;
  }
`;

const ApplyButton = styled.button`
  ${raised}
  width: 84px;
  height: 25px;
`;

const LegendRow = styled.div`
  display: flex;
  justify-content: center;
  padding: 3px 0 4px 116px;
`;

const Legend = styled.div`
  display: grid;
  grid-template-columns: 157px 61px 1fr;
  align-items: center;
  width: 306px;
  height: 23px;
  padding-left: 4px;
  border: 2px solid #999;
  background: #fff;
  box-shadow: 0 0 2px rgba(0, 0, 0, 0.4);
  color: #0ca05c;
`;

const LegendLabel = styled.label`
  display: flex;
  align-items: center;
  gap: 5px;
`;

const LegendCheck = styled.input`
  appearance: none;
  width: 12px;
  height: 12px;
  margin: 0;
  border: 1px solid #aaa;
  border-top: 2px solid #555;
  border-left: 2px solid #555;
  background: #fff;

  &:checked::before {
    content: "";
    display: block;
    width: 8px;
    height: 8px;
    background: #000;
    clip-path: polygon(8% 35%, 40% 62%, 95% 5%, 95% 38%, 40% 98%, 8% 68%);
  }
`;

const LegendLine = styled.span`
  width: 32px;
  height: 2px;
  background: #18a068;
`;

const StatusBar = styled.footer`
  display: flex;
  height: 23px;
  border-top: 1px solid #777;
`;

const StatusCell = styled.div`
  flex: ${(p) => (p.$grow ? "1" : `0 0 ${p.$width}px`)};
  padding-left: ${(p) => (p.$flush ? 1 : 3)}px;
  border-left: ${(p) => (p.$flush ? "0" : "1px solid #888")};
  box-shadow: ${(p) => (p.$flush ? "none" : "inset 1px 0 #f4f4f4")};
  line-height: 24px;
  white-space: nowrap;
`;
